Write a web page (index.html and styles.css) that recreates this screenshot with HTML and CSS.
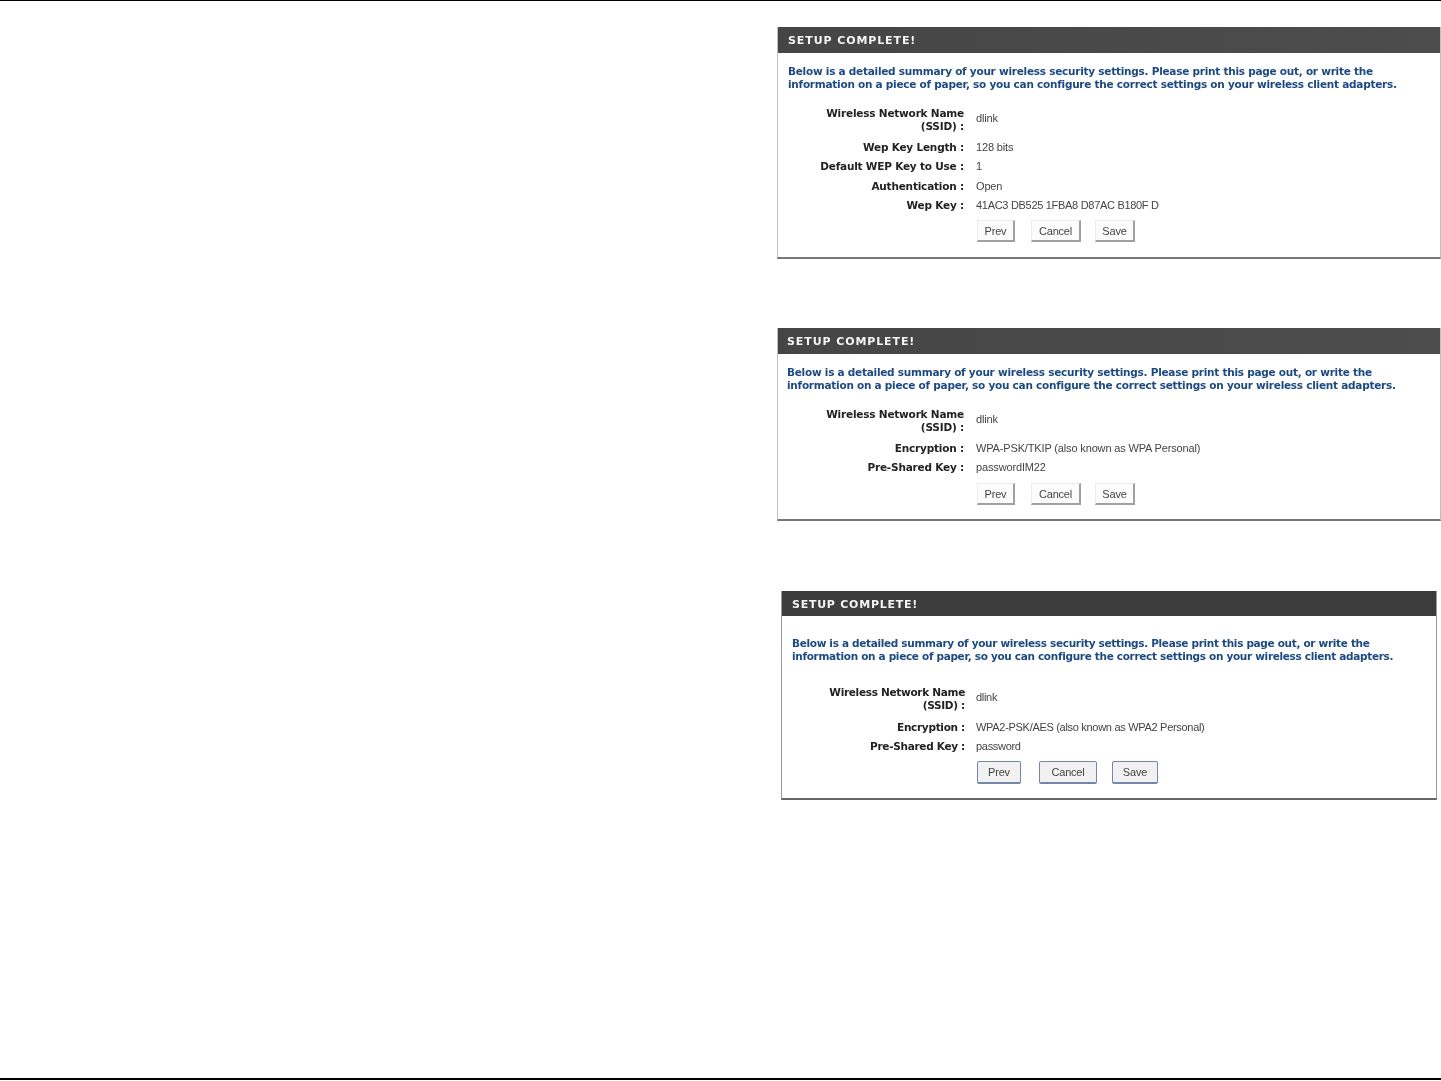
FILE: index.html
```html
<!DOCTYPE html>
<html lang="en">
<head>
<meta charset="utf-8">
<title>Setup Complete</title>
<link rel="stylesheet" href="styles.css">
</head>
<body>
<div class="page">
  <hr class="rule rule-top">
  <main class="shots">
    <section class="panel panel-wep">
      <h2 class="panel-title">SETUP COMPLETE!</h2>
      <p class="intro">Below is a detailed summary of your wireless security settings. Please print this page out, or write the<br>information on a piece of paper, so you can configure the correct settings on your wireless client adapters.</p>
      <dl class="summary">
        <dt class="tall">Wireless Network Name<br>(SSID) :</dt><dd>dlink</dd>
        <dt>Wep Key Length :</dt><dd>128 bits</dd>
        <dt>Default WEP Key to Use :</dt><dd>1</dd>
        <dt>Authentication :</dt><dd>Open</dd>
        <dt>Wep Key :</dt><dd class="key">41AC3 DB525 1FBA8 D87AC B180F D</dd>
      </dl>
      <div class="actions">
        <button class="btn btn-prev">Prev</button>
        <button class="btn btn-cancel">Cancel</button>
        <button class="btn btn-save">Save</button>
      </div>
    </section>

    <section class="panel panel-wpa">
      <h2 class="panel-title">SETUP COMPLETE!</h2>
      <p class="intro">Below is a detailed summary of your wireless security settings. Please print this page out, or write the<br>information on a piece of paper, so you can configure the correct settings on your wireless client adapters.</p>
      <dl class="summary">
        <dt class="tall">Wireless Network Name<br>(SSID) :</dt><dd>dlink</dd>
        <dt>Encryption :</dt><dd>WPA-PSK/TKIP (also known as WPA Personal)</dd>
        <dt>Pre-Shared Key :</dt><dd>passwordIM22</dd>
      </dl>
      <div class="actions">
        <button class="btn btn-prev">Prev</button>
        <button class="btn btn-cancel">Cancel</button>
        <button class="btn btn-save">Save</button>
      </div>
    </section>

    <section class="panel panel-wpa2">
      <h2 class="panel-title">SETUP COMPLETE!</h2>
      <p class="intro">Below is a detailed summary of your wireless security settings. Please print this page out, or write the<br>information on a piece of paper, so you can configure the correct settings on your wireless client adapters.</p>
      <dl class="summary">
        <dt class="tall">Wireless Network Name<br>(SSID) :</dt><dd>dlink</dd>
        <dt>Encryption :</dt><dd>WPA2-PSK/AES (also known as WPA2 Personal)</dd>
        <dt>Pre-Shared Key :</dt><dd>password</dd>
      </dl>
      <div class="actions">
        <button class="btn btn-prev">Prev</button>
        <button class="btn btn-cancel">Cancel</button>
        <button class="btn btn-save">Save</button>
      </div>
    </section>
  </main>
  <hr class="rule rule-bottom">
</div>
</body>
</html>
```

FILE: styles.css
```css
* { box-sizing: border-box; }
html, body { margin: 0; padding: 0; background: #fff; }
.page {
  height: 1081px;
  display: flex;
  flex-direction: column;
  overflow: hidden;
}
.rule { border: 0; margin: 0; background: #000; flex: none; }
.rule-top { height: 1px; }
.rule-bottom { height: 2px; margin-top: auto; margin-bottom: 1px; }
.shots {
  padding-left: 777px;
  display: flex;
  flex-direction: column;
  font-family: "DejaVu Sans", sans-serif;
  filter: blur(0.35px);
}
.panel {
  background: #fff;
  border: 1px solid #c0c0c0;
  border-top: 0;
  border-bottom: 2px solid #777;
}
.panel-wep { margin-top: 26px; height: 232px; }
.panel-wpa { margin-top: 69px; height: 193px; }
.panel-wpa2 { margin: 70px 4px 0; height: 209px; border-color: #999; border-bottom-color: #666; }

.panel-title {
  margin: 0;
  height: 26px;
  padding-left: 10px;
  background: linear-gradient(90deg, #454545, #4d4d4d);
  color: #f4f4f4;
  font-size: 11px;
  font-weight: 700;
  line-height: 28px;
  letter-spacing: 0.9px;
}
.panel-wpa .panel-title { padding-left: 9px; }
.panel-wpa2 .panel-title { height: 25px; line-height: 27px; background: #3d3d3d; letter-spacing: 0.75px; }

.intro {
  margin: 12px 0 0;
  padding-left: 10px;
  font-size: 10.5px;
  font-weight: 700;
  line-height: 13px;
  color: #1c4a80;
  white-space: nowrap;
  letter-spacing: -0.25px;
}
.panel-wpa .intro { padding-left: 9px; }
.panel-wpa2 .intro { margin-top: 21px; letter-spacing: -0.32px; }

.summary {
  margin: 13px 0 0;
  display: grid;
  grid-template-columns: 186px 1fr;
  column-gap: 12px;
  font-size: 11px;
  line-height: 13px;
  align-items: center;
}
.panel-wpa2 .summary { margin-top: 20px; grid-template-columns: 183px 1fr; column-gap: 11px; }
.summary dt {
  margin: 0;
  padding: 3.25px 0;
  text-align: right;
  font-weight: 700;
  font-size: 10.5px;
  color: #222;
  letter-spacing: -0.2px;
}
.panel-wpa2 .summary dt { letter-spacing: -0.3px; }
.summary dt.tall { padding-bottom: 4px; }
.panel-wpa2 .summary dt.tall { padding-bottom: 5px; }
.summary dd {
  margin: 0;
  font-family: "Liberation Sans", sans-serif;
  font-size: 11px;
  letter-spacing: -0.15px;
  color: #444;
}
.panel-wpa2 .summary dd { letter-spacing: -0.3px; }
.summary dd:first-of-type { margin-top: -5px; }
.summary dd.key { letter-spacing: -0.3px; }

.actions {
  margin: 5px 0 0 199px;
  display: flex;
  gap: 14px;
}
.panel-wpa .actions { margin-top: 6px; }
.actions .btn-cancel { margin-left: 2px; }
.panel-wpa2 .actions { margin: 5px 0 0 195px; gap: 15px; }
.panel-wpa2 .actions .btn-cancel { margin-left: 3px; }
.btn {
  height: 22px;
  padding: 0;
  background: #fcfcfc;
  border: 0;
  border-right: 2px solid #a0a0a0;
  border-bottom: 2px solid #a0a0a0;
  border-top: 1px solid #ececec;
  border-left: 1px solid #ececec;
  font-family: "Liberation Sans", sans-serif;
  font-size: 11px;
  letter-spacing: -0.2px;
  color: #444;
}
.btn-prev { width: 38px; }
.btn-cancel { width: 50px; }
.btn-save { width: 40px; }
.panel-wpa2 .btn {
  height: 23px;
  background: #f1f1f1;
  border: 1px solid #7487a8;
  border-bottom-width: 2px;
  border-radius: 2px;
}
.panel-wpa2 .btn-prev { width: 44px; }
.panel-wpa2 .btn-cancel { width: 58px; }
.panel-wpa2 .btn-save { width: 46px; }
```
